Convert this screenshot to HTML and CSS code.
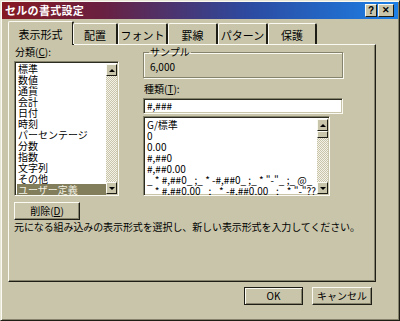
FILE: index.html
```html
<!DOCTYPE html>
<html lang="ja">
<head>
  <meta charset="utf-8">
  <title>セルの書式設定</title>
  <link rel="stylesheet" href="styles.css">
</head>
<body>
<div class="dialog">

  <div class="titlebar">
    <span class="title">セルの書式設定</span>
    <div class="caption-btns">
      <span class="cap-btn help">?</span>
      <span class="cap-btn close">✕</span>
    </div>
  </div>

  <div class="tabs">
    <div class="tab active t1">表示形式</div>
    <div class="tab t2">配置</div>
    <div class="tab t3">フォント</div>
    <div class="tab t4">罫線</div>
    <div class="tab t5">パターン</div>
    <div class="tab t6">保護</div>
  </div>

  <div class="panel">
    <div class="cols">
      <div class="col-left">
        <div class="label">分類(<u>C</u>):</div>
        <div class="listbox cat">
          <ul class="items">
            <li>標準</li>
            <li>数値</li>
            <li>通貨</li>
            <li>会計</li>
            <li>日付</li>
            <li>時刻</li>
            <li>パーセンテージ</li>
            <li>分数</li>
            <li>指数</li>
            <li>文字列</li>
            <li>その他</li>
            <li class="selected">ユーザー定義</li>
          </ul>
          <div class="scrollbar">
            <span class="sb-btn up"></span>
            <span class="sb-track"></span>
            <span class="sb-btn down"></span>
          </div>
        </div>
      </div>

      <div class="col-right">
        <fieldset class="sample">
          <legend>サンプル</legend>
          <div class="sample-val">6,000</div>
        </fieldset>
        <div class="label kind">種類(<u>T</u>):</div>
        <div class="textbox">#,###</div>
        <div class="listbox fmt">
          <ul class="items">
            <li>G/標準</li>
            <li>0</li>
            <li>0.00</li>
            <li>#,##0</li>
            <li>#,##0.00</li>
            <li>_ * #,##0_ ;_ * -#,##0_ ;_ * "-"_ ;_ @_ </li>
            <li>_ * #,##0.00_ ;_ * -#,##0.00_ ;_ * "-"??_ ;_ @_ </li>
          </ul>
          <div class="scrollbar">
            <span class="sb-btn up"></span>
            <span class="sb-thumb"></span>
            <span class="sb-track"></span>
            <span class="sb-btn down"></span>
          </div>
        </div>
      </div>
    </div>

    <button class="btn del">削除(<u>D</u>)</button>
    <p class="hint">元になる組み込みの表示形式を選択し、新しい表示形式を入力してください。</p>
  </div>

  <div class="footer">
    <button class="btn ok">OK</button>
    <button class="btn cancel">キャンセル</button>
  </div>

</div>
</body>
</html>
```

FILE: styles.css
```css
* {
  box-sizing: border-box;
}

body {
  margin: 0;
  background: #c8c5aa;
  font-family: "Noto Sans CJK JP", "Liberation Sans", sans-serif;
  font-size: 10px;
  color: #000;
}

.dialog {
  width: 400px;
  height: 321px;
  border: 1px solid;
  border-color: #e8e6d6 #1e1e16 #1e1e16 #e8e6d6;
  box-shadow: inset 1px 1px 0 #fbfaf2, inset -1px -1px 0 #86836c;
  padding: 1px;
  display: flex;
  flex-direction: column;
}

/* title bar */
.titlebar {
  height: 17px;
  flex: none;
  display: flex;
  align-items: center;
  justify-content: space-between;
  padding: 0 4px 0 3px;
  background: linear-gradient(to right, #861a22 0%, #6a2040 25%, #2c4aa0 62%, #1c80e6 100%);
  color: #fff;
}

.title {
  font-weight: bold;
  font-size: 11px;
  letter-spacing: 0.3px;
  line-height: 17px;
}

.caption-btns {
  display: flex;
  gap: 1px;
}

.cap-btn {
  width: 12px;
  height: 13px;
  background: #c8c5aa;
  border: 1px solid;
  border-color: #fbfaf2 #1e1e16 #1e1e16 #fbfaf2;
  color: #000;
  font: bold 10px "Liberation Sans", sans-serif;
  display: flex;
  align-items: center;
  justify-content: center;
  line-height: 1;
}

.cap-btn.close {
  width: 16px;
  font-size: 9px;
}

/* tabs */
.tabs {
  height: 25px;
  flex: none;
  display: flex;
  align-items: flex-end;
  padding-left: 6px;
  position: relative;
  z-index: 1;
}

.tab {
  height: 21px;
  border-top: 1px solid #fbfaf2;
  border-left: 1px solid #fbfaf2;
  border-right: 2px solid #1e1e16;
  border-top-left-radius: 2px;
  border-top-right-radius: 2px;
  font-size: 11px;
  line-height: 20px;
  padding-top: 1px;
  text-align: center;
  background: #c8c5aa;
}

.tab.active {
  height: 24px;
  margin-bottom: -1px;
  line-height: 22px;
}

.t1 { width: 66px; }
.t2 { width: 45px; margin-left: -1px; }
.t3 { width: 50px; }
.t4 { width: 50px; }
.t5 { width: 50px; }
.t6 { width: 49px; }

/* main panel */
.panel {
  width: 368px;
  height: 238px;
  flex: none;
  margin-left: 6px;
  border: 1px solid;
  border-color: #fbfaf2 #1e1e16 #1e1e16 #fbfaf2;
  box-shadow: inset -1px -1px 0 #86836c;
  padding: 0 0 0 5px;
}

.cols {
  display: grid;
  grid-template-columns: 105px 200px;
  column-gap: 24px;
}

.label {
  height: 16px;
  line-height: 14px;
  padding-left: 1px;
}

.label u,
.btn u {
  text-decoration: underline;
}

/* list boxes */
.listbox {
  display: flex;
  background: #fff;
  border: 1px solid;
  border-color: #86836c #fbfaf2 #fbfaf2 #86836c;
  box-shadow: inset 1px 1px 0 #2c2c20, inset -1px -1px 0 #c8c5aa;
  padding: 1px 1px 0 2px;
  overflow: hidden;
}

.listbox.cat {
  height: 135px;
}

.listbox.fmt {
  width: 187px;
  height: 80px;
}

.items {
  list-style: none;
  margin: 0;
  padding: 0;
  flex: 1;
  min-width: 0;
  overflow: hidden;
}

.items li {
  height: 11px;
  line-height: 11px;
  padding-left: 1px;
  white-space: pre;
}

.fmt .items {
  padding-top: 1px;
}

.items li.selected {
  background: #827e5c;
  color: #f2f0e2;
}

.scrollbar {
  width: 11px;
  flex: none;
  display: flex;
  flex-direction: column;
  margin-top: 1px;
  margin-bottom: 1px;
}

.sb-track {
  flex: 1;
  background-color: #eceadc;
  background-image: repeating-conic-gradient(#c8c5aa 0 25%, #f4f2e8 0 50%);
  background-size: 2px 2px;
}

.sb-btn,
.sb-thumb {
  height: 12px;
  flex: none;
  background: #c8c5aa;
  border: 1px solid;
  border-color: #fbfaf2 #1e1e16 #1e1e16 #fbfaf2;
  display: flex;
  align-items: center;
  justify-content: center;
}

.sb-thumb {
  height: 7px;
}

.sb-btn::after {
  content: "";
  border-left: 3px solid transparent;
  border-right: 3px solid transparent;
}

.sb-btn.up::after {
  border-bottom: 3px solid #000;
}

.sb-btn.down::after {
  border-top: 3px solid #000;
}

/* right column */
.sample {
  margin: 1px 0 0 0;
  padding: 0 6px;
  height: 32px;
  border: 1px solid #86836c;
  box-shadow: inset 1px 1px 0 #fbfaf2, 1px 1px 0 #fbfaf2;
}

.sample legend {
  padding: 0 1px;
  margin-left: -1px;
  font-size: 10px;
  line-height: 12px;
}

.sample-val {
  line-height: 14px;
  padding-top: 2px;
}

.label.kind {
  margin-top: 4px;
  height: 16px;
  line-height: 13px;
}

.textbox {
  height: 16px;
  width: 200px;
  background: #fff;
  border: 1px solid;
  border-color: #86836c #fbfaf2 #fbfaf2 #86836c;
  box-shadow: inset 1px 1px 0 #2c2c20, inset -1px -1px 0 #c8c5aa;
  padding: 0 3px;
  line-height: 14px;
  margin-bottom: 2px;
}

/* buttons */
.btn {
  display: block;
  height: 18px;
  background: #c8c5aa;
  border: 1px solid;
  border-color: #fbfaf2 #1e1e16 #1e1e16 #fbfaf2;
  box-shadow: inset -1px -1px 0 #86836c;
  font-family: "Noto Sans CJK JP", "Liberation Sans", sans-serif;
  font-size: 10px;
  line-height: 14px;
  padding: 0;
  color: #000;
}

.btn.del {
  width: 66px;
  margin-top: 6px;
}

.hint {
  margin: 1px 0 0 0;
  line-height: 12px;
  letter-spacing: -0.1px;
  white-space: nowrap;
}

.footer {
  display: flex;
  justify-content: flex-end;
  gap: 9px;
  padding: 5px 26px 0 0;
}

.btn.ok {
  width: 59px;
  outline: 1px solid #1e1e16;
  outline-offset: -1px;
  border-color: #1e1e16;
  box-shadow: inset 1px 1px 0 #fbfaf2, inset -1px -1px 0 #86836c;
}

.btn.cancel {
  width: 60px;
}
```
